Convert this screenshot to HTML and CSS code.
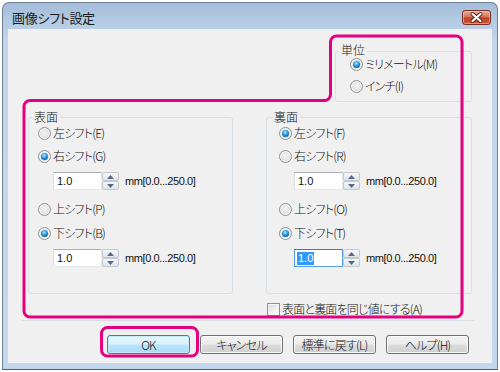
FILE: index.html
```html
<!DOCTYPE html>
<html lang="ja">
<head>
<meta charset="utf-8">
<title>画像シフト設定</title>
<link rel="stylesheet" href="styles.css">
</head>
<body>
<div class="window">
  <div class="titlebar">
    <span class="title">画像シフト設定</span>
    <div class="close">
      <svg width="27" height="13" viewBox="0 0 27 13">
        <path d="M9.5 3 L17.5 10 M17.5 3 L9.5 10" stroke="#5a1d14" stroke-width="4" stroke-linecap="round"/>
        <path d="M9.5 3 L17.5 10 M17.5 3 L9.5 10" stroke="#ffffff" stroke-width="2.2" stroke-linecap="round"/>
      </svg>
    </div>
  </div>
  <div class="client">
    <div class="row-unit">
      <div class="group g-unit">
        <div class="group-title">単位</div>
        <div class="opt u1"><span class="radio on"></span><span>ミリメートル(M)</span></div>
        <div class="opt u2"><span class="radio"></span><span>インチ(I)</span></div>
      </div>
    </div>
    <div class="row-sides">
      <div class="group g-side g-front">
        <div class="group-title">表面</div>
        <div class="opt s1"><span class="radio"></span><span>左シフト(E)</span></div>
        <div class="opt s2"><span class="radio on"></span><span>右シフト(G)</span></div>
        <div class="spin-row s3">
          <div class="spin">
            <div class="spin-input"><span>1.0</span></div>
            <div class="spin-btns">
              <div class="spin-btn"><svg width="7" height="4" viewBox="0 0 7 4"><polygon points="3.5,0 7,4 0,4" fill="#56698a"/></svg></div>
              <div class="spin-btn"><svg width="7" height="4" viewBox="0 0 7 4"><polygon points="0,0 7,0 3.5,4" fill="#56698a"/></svg></div>
            </div>
          </div>
          <span class="unit-text">mm[0.0...250.0]</span>
        </div>
        <div class="opt s4"><span class="radio"></span><span>上シフト(P)</span></div>
        <div class="opt s5"><span class="radio on"></span><span>下シフト(B)</span></div>
        <div class="spin-row s6">
          <div class="spin">
            <div class="spin-input"><span>1.0</span></div>
            <div class="spin-btns">
              <div class="spin-btn"><svg width="7" height="4" viewBox="0 0 7 4"><polygon points="3.5,0 7,4 0,4" fill="#56698a"/></svg></div>
              <div class="spin-btn"><svg width="7" height="4" viewBox="0 0 7 4"><polygon points="0,0 7,0 3.5,4" fill="#56698a"/></svg></div>
            </div>
          </div>
          <span class="unit-text">mm[0.0...250.0]</span>
        </div>
      </div>
      <div class="group g-side g-back">
        <div class="group-title">裏面</div>
        <div class="opt s1"><span class="radio on"></span><span>左シフト(F)</span></div>
        <div class="opt s2"><span class="radio"></span><span>右シフト(R)</span></div>
        <div class="spin-row s3">
          <div class="spin">
            <div class="spin-input"><span>1.0</span></div>
            <div class="spin-btns">
              <div class="spin-btn"><svg width="7" height="4" viewBox="0 0 7 4"><polygon points="3.5,0 7,4 0,4" fill="#56698a"/></svg></div>
              <div class="spin-btn"><svg width="7" height="4" viewBox="0 0 7 4"><polygon points="0,0 7,0 3.5,4" fill="#56698a"/></svg></div>
            </div>
          </div>
          <span class="unit-text">mm[0.0...250.0]</span>
        </div>
        <div class="opt s4"><span class="radio"></span><span>上シフト(O)</span></div>
        <div class="opt s5"><span class="radio on"></span><span>下シフト(T)</span></div>
        <div class="spin-row s6">
          <div class="spin focused">
            <div class="spin-input"><span class="sel">1.0</span></div>
            <div class="spin-btns">
              <div class="spin-btn"><svg width="7" height="4" viewBox="0 0 7 4"><polygon points="3.5,0 7,4 0,4" fill="#56698a"/></svg></div>
              <div class="spin-btn"><svg width="7" height="4" viewBox="0 0 7 4"><polygon points="0,0 7,0 3.5,4" fill="#56698a"/></svg></div>
            </div>
          </div>
          <span class="unit-text">mm[0.0...250.0]</span>
        </div>
      </div>
    </div>
    <div class="row-check">
      <div class="check-item"><span class="checkbox"></span><span>表面と裏面を同じ値にする(A)</span></div>
    </div>
    <div class="row-buttons">
      <div class="btn default">OK</div>
      <div class="btn">キャンセル</div>
      <div class="btn">標準に戻す(L)</div>
      <div class="btn">ヘルプ(H)</div>
    </div>
  </div>
</div>
<svg class="annot" width="500" height="372" viewBox="0 0 500 372">
  <path d="M30 100.5 L324.5 100.5 A6 6 0 0 0 330.5 94.5 L330.5 42 A6 6 0 0 1 336.5 36 L456 36 A6 6 0 0 1 462 42 L462 311 A6 6 0 0 1 456 317 L30 317 A6 6 0 0 1 24 311 L24 106.5 A6 6 0 0 1 30 100.5 Z" fill="none" stroke="#e4007f" stroke-width="3"/>
  <rect x="101.5" y="327.5" width="96" height="28.5" rx="6" fill="none" stroke="#e4007f" stroke-width="3"/>
</svg>
</body>
</html>
```

FILE: styles.css
```css
html, body {
  margin: 0;
  padding: 0;
  background: #ffffff;
}
body {
  width: 500px;
  height: 372px;
  overflow: hidden;
  font-family: "Noto Sans CJK JP", "Noto Sans", sans-serif;
  font-size: 12px;
  font-weight: 300;
  letter-spacing: -0.8px;
  color: #111111;
  font-feature-settings: "palt";
}
.window {
  margin: 2px 2px 0 2px;
  width: 496px;
  height: 368px;
  box-sizing: border-box;
  border: 1px solid #6f8093;
  border-bottom-color: #35687a;
  border-radius: 7px 7px 0 0;
  background: linear-gradient(#a3bcd9 0px, #b6cce5 20px, #c2d6ec 40px, #c3d7ed 100%);
  display: flex;
  flex-direction: column;
}
.titlebar {
  height: 26px;
  display: flex;
  align-items: flex-start;
  justify-content: space-between;
}
.title {
  margin: 7px 0 0 9px;
  font-size: 13px;
  font-weight: 400;
  line-height: 16px;
  letter-spacing: -0.3px;
  color: #1a1a1a;
}
.close {
  margin: 7px 6px 0 0;
  width: 29px;
  height: 15px;
  box-sizing: border-box;
  border: 1px solid #7a2e25;
  border-radius: 3px;
  background: linear-gradient(#e9a894 0%, #d8775f 45%, #c24323 52%, #cc5634 100%);
  box-shadow: inset 0 0 0 1px rgba(255, 210, 195, 0.5);
  display: flex;
  align-items: center;
  justify-content: center;
}
.close svg {
  display: block;
}
.client {
  margin: 0 5px;
  height: 334px;
  background: #f0f0f0;
  box-sizing: border-box;
  padding: 22px 20px 0 20px;
  display: flex;
  flex-direction: column;
}
.row-unit {
  display: flex;
  justify-content: flex-end;
}
.group {
  box-sizing: border-box;
  border: 1px solid #d5dfe5;
  border-radius: 3px;
  display: flex;
  flex-direction: column;
}
.group-title {
  width: fit-content;
  margin: -8px 0 0 3px;
  padding: 0 2px;
  background: #f0f0f0;
  line-height: 14px;
  height: 14px;
  letter-spacing: 0;
}
.g-unit {
  width: 137px;
  height: 51px;
  padding-left: 14px;
}
.g-unit .group-title {
  margin-left: -11px;
  margin-top: -9px;
}
.opt {
  display: flex;
  align-items: center;
  gap: 2px;
  height: 20px;
  line-height: 14px;
  white-space: nowrap;
}
.u1 { height: 18px; margin-top: -2px; }
.u2 { height: 18px; margin-top: 4px; }
.row-sides {
  margin-top: 15px;
  display: grid;
  grid-template-columns: 205px 206px;
  column-gap: 33px;
}
.g-side {
  height: 177px;
}
.g-front { padding-left: 9px; }
.g-back { padding-left: 12px; }
.g-front .group-title { margin-left: -6px; }
.g-back .group-title { margin-left: -7px; }
.s1 { margin-top: -1px; }
.s2 { margin-top: 3px; }
.s3 { margin-top: 6px; }
.s4 { margin-top: 9px; }
.s5 { margin-top: 4px; }
.s6 { margin-top: 6px; }
.radio {
  flex: none;
  width: 13px;
  height: 13px;
  box-sizing: border-box;
  border-radius: 50%;
  border: 1px solid #8e9193;
  background: radial-gradient(circle at 50% 45%, #f4f4f4 0%, #e6e6e6 45%, #c9c9c9 100%);
  box-shadow: inset 0 0 0 1px #fafafa;
  display: flex;
  align-items: center;
  justify-content: center;
}
.radio.on::after {
  content: "";
  width: 7px;
  height: 7px;
  border-radius: 50%;
  background: radial-gradient(circle at 45% 35%, #b8ecff 0%, #37a7e8 35%, #0f5fa3 75%, #0b3e6e 100%);
}
.spin-row {
  display: flex;
  align-items: center;
  padding-left: 15px;
  height: 18px;
}
.spin {
  display: flex;
  height: 18px;
}
.spin-input {
  width: 49px;
  height: 18px;
  box-sizing: border-box;
  background: #ffffff;
  border: 1px solid #e3e9ef;
  border-top-color: #abadb3;
  border-left-color: #dbdfe6;
  font-family: "Liberation Sans", "Noto Sans", sans-serif;
  font-weight: 400;
  font-size: 11px;
  letter-spacing: 0;
  line-height: 16px;
  padding-left: 3px;
  display: flex;
  align-items: center;
}
.spin.focused .spin-input {
  border-color: #569de5;
  border-top-color: #3d7bad;
}
.sel {
  background: #3399ff;
  color: #ffffff;
  line-height: 13px;
  padding: 0 1px;
  margin-left: -1px;
}
.spin-btns {
  width: 17px;
  height: 18px;
  display: flex;
  flex-direction: column;
}
.spin-btn {
  height: 9px;
  box-sizing: border-box;
  border: 1px solid #c3c8ce;
  border-radius: 2px;
  background: linear-gradient(#f6f7f9, #dfe5ec);
  display: flex;
  align-items: center;
  justify-content: center;
}
.spin-btn svg {
  display: block;
}
.unit-text {
  margin-left: 6px;
  font-family: "Liberation Sans", "Noto Sans", sans-serif;
  font-weight: 400;
  font-size: 11px;
  letter-spacing: -0.4px;
  line-height: 14px;
  white-space: nowrap;
}
.row-check {
  margin: 7px -2px 0 -7px;
  height: 19px;
  border-bottom: 1px solid #d5dfe5;
  display: flex;
  justify-content: flex-start;
  padding-left: 246px;
}
.check-item {
  display: flex;
  align-items: center;
  gap: 2px;
  height: 16px;
  line-height: 14px;
  white-space: nowrap;
}
.checkbox {
  flex: none;
  width: 13px;
  height: 13px;
  box-sizing: border-box;
  border: 1px solid #8e8f8f;
  background: linear-gradient(135deg, #d9d9d9 0%, #f2f2f2 60%, #fafafa 100%);
  box-shadow: inset 0 0 0 1px #f4f4f4;
}
.row-buttons {
  margin-top: 14px;
  display: flex;
  justify-content: flex-end;
  gap: 10px;
  padding-right: 3px;
}
.btn {
  width: 83px;
  height: 19px;
  box-sizing: border-box;
  border: 1px solid #707070;
  border-radius: 3px;
  background: linear-gradient(#f2f2f2 0%, #ebebeb 48%, #dddddd 52%, #cfcfcf 100%);
  box-shadow: inset 0 0 0 1px #fbfbfb;
  display: flex;
  align-items: center;
  justify-content: center;
  line-height: 14px;
  white-space: nowrap;
}
.btn.default {
  border-color: #3c7fb1;
  background: linear-gradient(#eaf6fd 0%, #d9f0fc 48%, #bee6fd 52%, #a7d9f5 100%);
  box-shadow: inset 0 0 0 1px #c8ebfc;
}
.annot {
  position: absolute;
  left: 0;
  top: 0;
  pointer-events: none;
}
```
